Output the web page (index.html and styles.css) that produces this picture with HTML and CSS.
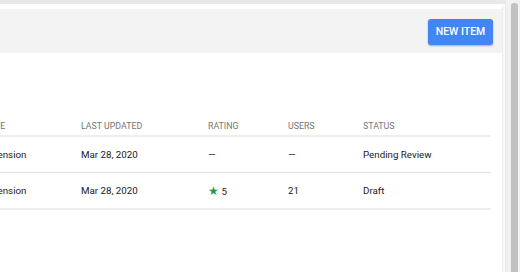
FILE: index.html
```html
<!DOCTYPE html>
<html lang="en">
<head>
  <meta charset="UTF-8" />
  <title>Items</title>
  <link rel="stylesheet" href="styles.css">
</head>
<body>
  <div class="main">
    <div class="card">
      <div class="toolbar">
        <button class="btn-new">New item</button>
      </div>
      <div class="card-body">
        <table class="items">
          <thead>
            <tr>
              <th class="c-type">Type</th>
              <th class="c-date">Last updated</th>
              <th class="c-rating">Rating</th>
              <th class="c-users">Users</th>
              <th class="c-status">Status</th>
            </tr>
          </thead>
          <tbody>
            <tr>
              <td>Extension</td>
              <td>Mar 28, 2020</td>
              <td>&mdash;</td>
              <td>&mdash;</td>
              <td>Pending Review</td>
            </tr>
            <tr>
              <td>Extension</td>
              <td>Mar 28, 2020</td>
              <td><span class="star">&#9733;</span> 5</td>
              <td>21</td>
              <td>Draft</td>
            </tr>
          </tbody>
        </table>
      </div>
    </div>
  </div>
  <div class="scrollbar"><div class="thumb"></div></div>
</body>
</html>
```

FILE: styles.css
```css
html, body {
  height: 100%;
}
body {
  margin: 0;
  display: flex;
  overflow: hidden;
  font-family: Roboto, Arial, sans-serif;
  background: #fff;
}
.main {
  flex: 1;
  min-width: 0;
  border-top: 4px solid #e8e8e8;
  padding: 0 3px 0 0;
  overflow: hidden;
}
.card {
  margin-left: -36px;
  padding-top: 5px;
  background: #fff;
  box-shadow: 0 1px 3px rgba(0,0,0,0.18);
  height: 400px;
}
.toolbar {
  height: 44px;
  background: #f3f3f3;
  display: flex;
  align-items: center;
  justify-content: flex-end;
  padding-right: 9px;
}
.btn-new {
  height: 26px;
  width: 65px;
  padding: 0;
  background: #4285f4;
  color: #fff;
  border: none;
  border-radius: 3px;
  font-family: Roboto, Arial, sans-serif;
  font-size: 10.5px;
  font-weight: 500;
  text-transform: uppercase;
  box-shadow: 0 1px 2px rgba(0,0,0,0.3);
  margin-top: 1px;
}
.card-body {
  padding: 64px 11px 0 20px;
}
.items {
  width: 100%;
  border-collapse: collapse;
  table-layout: fixed;
}
.items th {
  text-align: left;
  font-size: 8.8px;
  font-weight: 400;
  color: #757575;
  text-transform: uppercase;
  height: 18px;
  padding: 0;
  vertical-align: middle;
  border-bottom: 2px solid #eeeeee;
}
.items td {
  font-size: 9.75px;
  color: #212121;
  height: 35px;
  padding: 0;
  border-bottom: 1px solid #e0e0e0;
}
.items tbody tr:last-child td {
  border-bottom: 2px solid #eeeeee;
}
.c-type { width: 97px; }
.c-date { width: 127px; }
.c-rating { width: 80px; }
.c-users { width: 75px; }
.star {
  color: #0f9d58;
  font-size: 12px;
}
.scrollbar {
  width: 15px;
  flex: none;
  background: #f1f1f1;
  border-left: 1px solid #e6e6e6;
  box-sizing: border-box;
  padding: 3px 2px 0 5px;
}
.thumb {
  height: 100%;
  background: #c1c1c1;
  border-radius: 3px 3px 0 0;
}
```
